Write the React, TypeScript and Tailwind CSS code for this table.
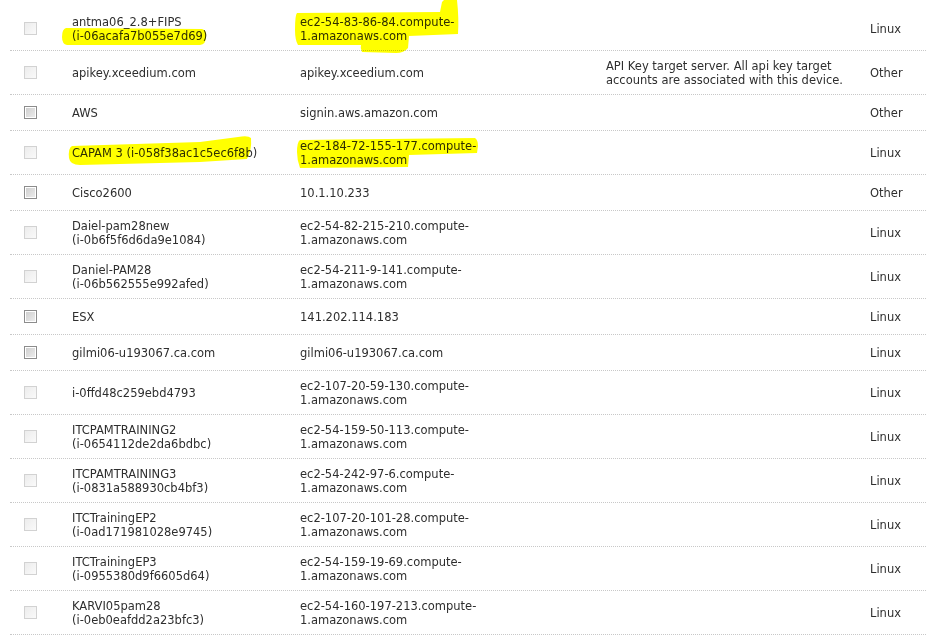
import React from 'react';

interface DeviceRow {
  name: string[];
  dns: string[];
  desc?: string[];
  os: string;
  dark?: boolean;
}

const rows: DeviceRow[] = [
  { name: ['antma06_2.8+FIPS', '(i-06acafa7b055e7d69)'], dns: ['ec2-54-83-86-84.compute-', '1.amazonaws.com'], os: 'Linux' },
  {
    name: ['apikey.xceedium.com'],
    dns: ['apikey.xceedium.com'],
    desc: ['API Key target server. All api key target', 'accounts are associated with this device.'],
    os: 'Other'
  },
  { name: ['AWS'], dns: ['signin.aws.amazon.com'], os: 'Other', dark: true },
  { name: ['CAPAM 3 (i-058f38ac1c5ec6f8b)'], dns: ['ec2-184-72-155-177.compute-', '1.amazonaws.com'], os: 'Linux' },
  { name: ['Cisco2600'], dns: ['10.1.10.233'], os: 'Other', dark: true },
  { name: ['Daiel-pam28new', '(i-0b6f5f6d6da9e1084)'], dns: ['ec2-54-82-215-210.compute-', '1.amazonaws.com'], os: 'Linux' },
  { name: ['Daniel-PAM28', '(i-06b562555e992afed)'], dns: ['ec2-54-211-9-141.compute-', '1.amazonaws.com'], os: 'Linux' },
  { name: ['ESX'], dns: ['141.202.114.183'], os: 'Linux', dark: true },
  { name: ['gilmi06-u193067.ca.com'], dns: ['gilmi06-u193067.ca.com'], os: 'Linux', dark: true },
  { name: ['i-0ffd48c259ebd4793'], dns: ['ec2-107-20-59-130.compute-', '1.amazonaws.com'], os: 'Linux' },
  { name: ['ITCPAMTRAINING2', '(i-0654112de2da6bdbc)'], dns: ['ec2-54-159-50-113.compute-', '1.amazonaws.com'], os: 'Linux' },
  { name: ['ITCPAMTRAINING3', '(i-0831a588930cb4bf3)'], dns: ['ec2-54-242-97-6.compute-', '1.amazonaws.com'], os: 'Linux' },
  { name: ['ITCTrainingEP2', '(i-0ad171981028e9745)'], dns: ['ec2-107-20-101-28.compute-', '1.amazonaws.com'], os: 'Linux' },
  { name: ['ITCTrainingEP3', '(i-0955380d9f6605d64)'], dns: ['ec2-54-159-19-69.compute-', '1.amazonaws.com'], os: 'Linux' },
  { name: ['KARVI05pam28', '(i-0eb0eafdd2a23bfc3)'], dns: ['ec2-54-160-197-213.compute-', '1.amazonaws.com'], os: 'Linux' }
];

const Lines: React.FC<{ lines?: string[] }> = ({ lines }) => (
  <div>
    {(lines || []).map((l, i) => (
      <div key={i} className="whitespace-nowrap">{l}</div>
    ))}
  </div>
);

const Checkbox: React.FC<{ dark?: boolean }> = ({ dark }) =>
  dark ? (
    <div className="w-[13px] h-[13px] border border-[#8c8c8c] bg-white p-px">
      <div className="w-full h-full bg-gradient-to-br from-[#cfcfcf] to-[#ececec]" />
    </div>
  ) : (
    <div className="w-[13px] h-[13px] border border-[#d2d2d2] bg-gradient-to-br from-[#ececec] to-[#fafafa]" />
  );

export default function App() {
  return (
    <div
      className="relative w-[926px] h-[639px] overflow-hidden bg-white pt-[7px] pl-[10px] text-[11.5px] leading-[14px] text-[#2e2e2e]"
      style={{ fontFamily: '"DejaVu Sans", Verdana, sans-serif' }}
    >
      {rows.map((r, i) => {
        const tall = Math.max(r.name.length, r.dns.length, r.desc ? r.desc.length : 0) > 1;
        return (
          <div
            key={i}
            className={`flex items-center border-b border-dotted border-[#c8c8c8] ${tall ? 'h-[44px]' : 'h-[36px]'}`}
          >
            <div className="w-[62px] shrink-0 pl-[14px]">
              <Checkbox dark={r.dark} />
            </div>
            <div className="w-[228px] shrink-0">
              <Lines lines={r.name} />
            </div>
            <div className="w-[306px] shrink-0">
              <Lines lines={r.dns} />
            </div>
            <div className="w-[264px] shrink-0">
              <Lines lines={r.desc} />
            </div>
            <div className="flex-1">{r.os}</div>
          </div>
        );
      })}

      {/* highlighter strokes drawn over the screenshot */}
      <svg
        className="absolute left-0 top-0 pointer-events-none mix-blend-multiply"
        width="926"
        height="639"
        viewBox="0 0 926 639"
      >
        <g fill="#ffff00">
          <path d="M66,28 L202,29 Q207,30 206,37 Q206,44 200,45 L67,45 Q62,44 62,37 Q62,29 66,28 Z" />
          <path d="M297,13 L440,12 L442,2 L444,0 L457,0 Q459,18 458,34 L409,36 L408,48 Q404,53 396,53 L362,52 Q360,48 361,45 L298,45 Q295,40 295,30 Q295,15 297,13 Z" />
          <path d="M72,146 L200,142 L238,137 Q248,135 251,138 Q252,150 247,159 L200,162 L80,165 Q70,165 69,158 Q68,148 72,146 Z" />
          <path d="M300,140 L475,138 Q478,140 478,146 L477,153 L409,155 L408,167 L300,168 Q297,160 297,152 Q297,142 300,140 Z" />
        </g>
      </svg>
    </div>
  );
}
